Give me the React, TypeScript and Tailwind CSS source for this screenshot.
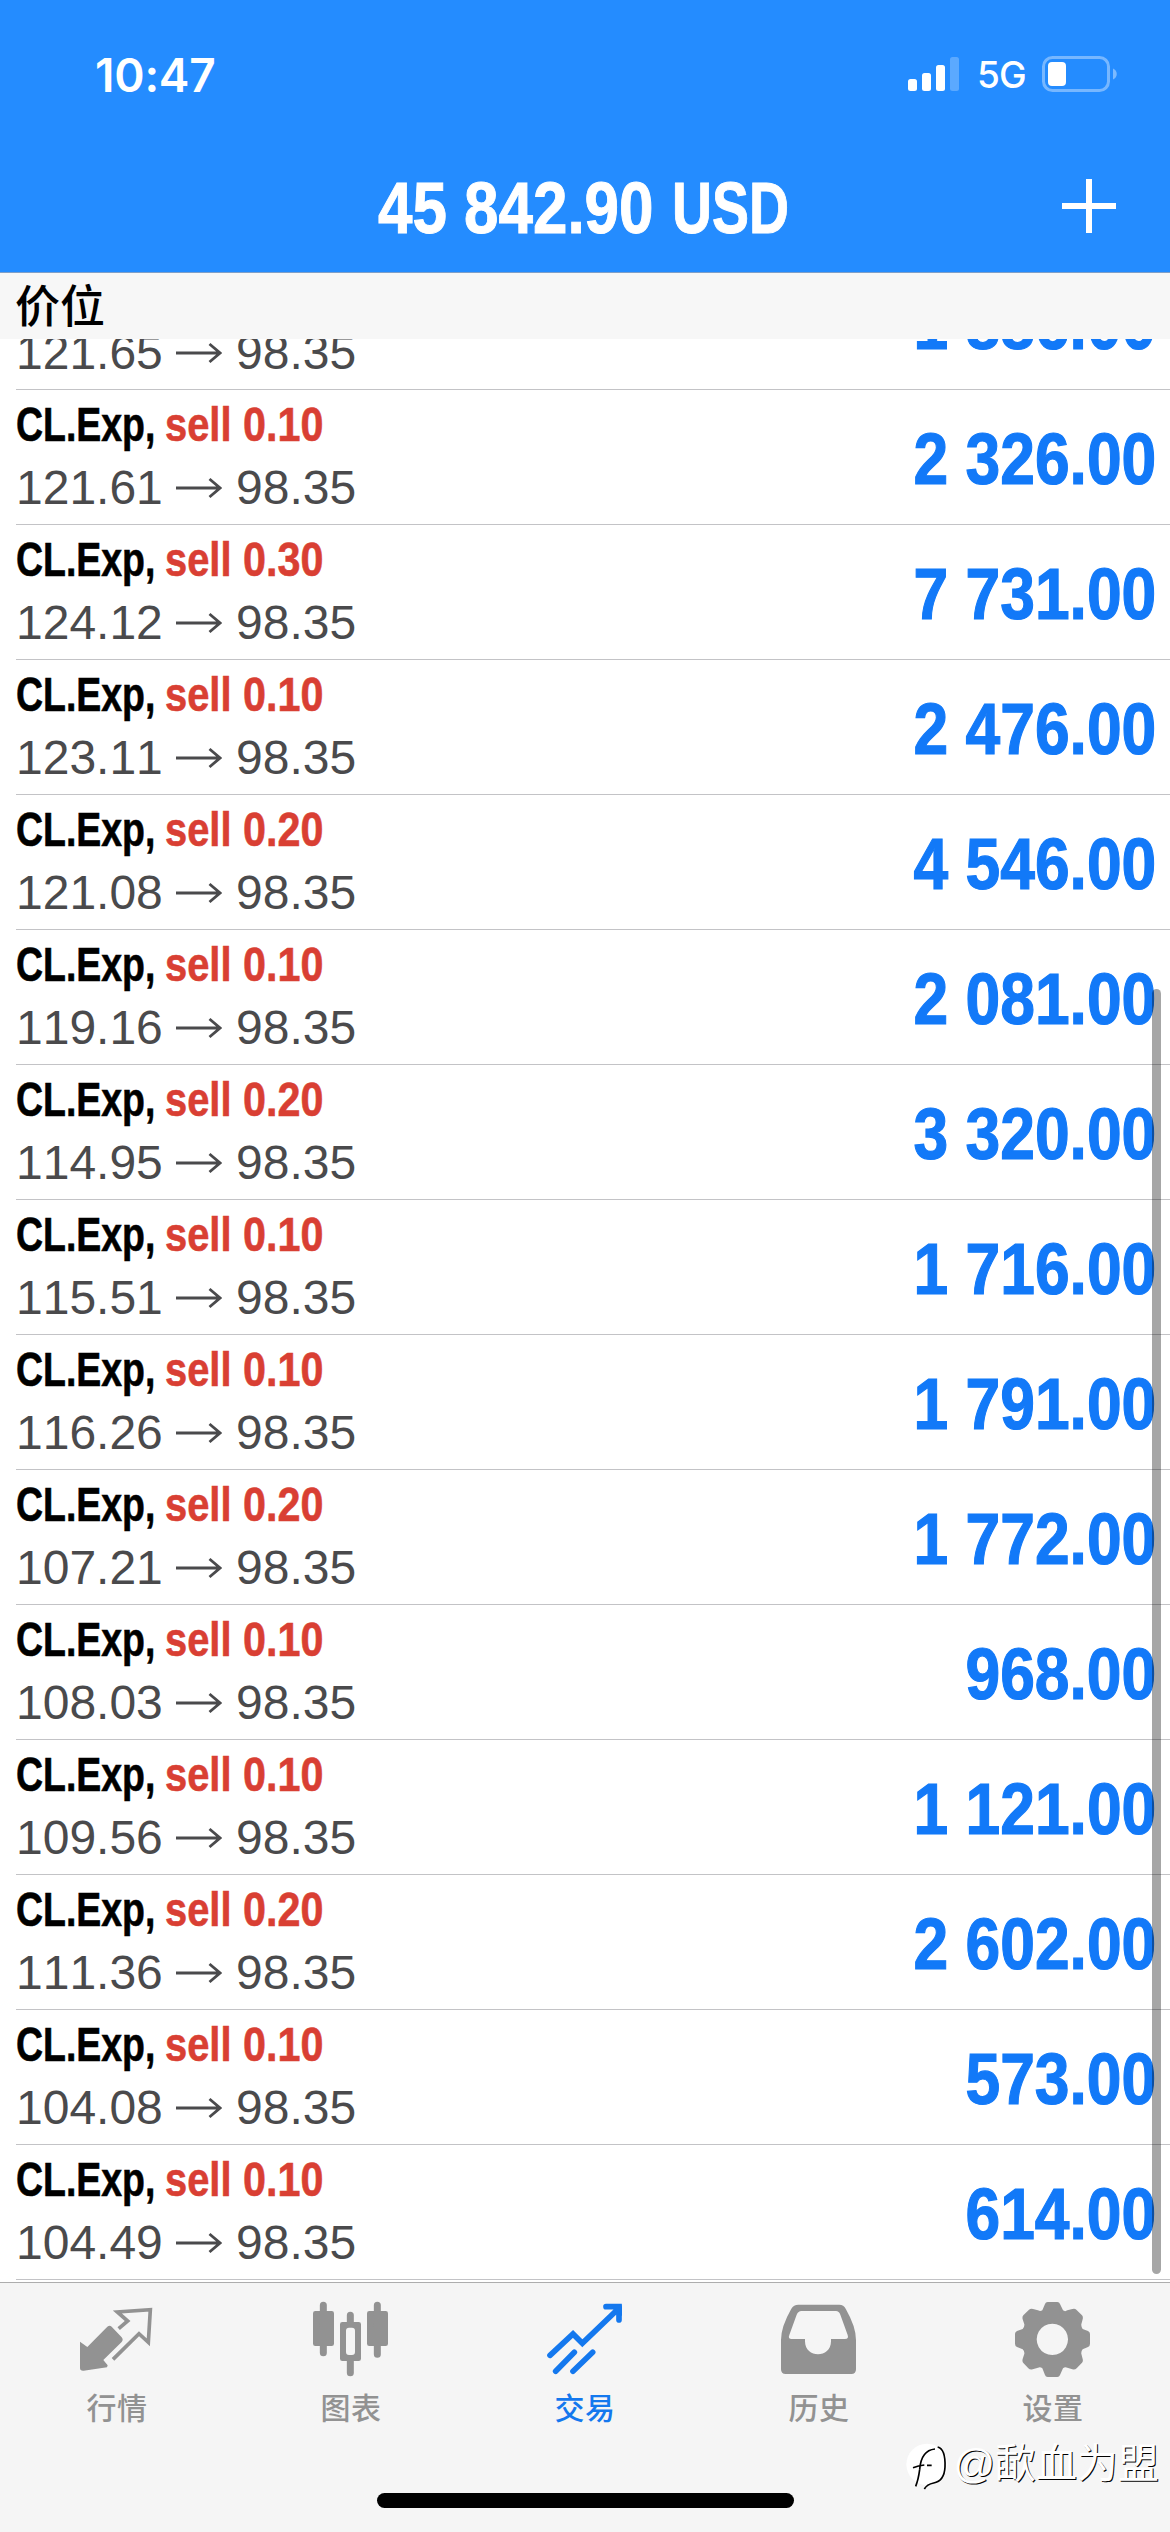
import React from "react";

const positions = [
  { volume: "0.10", open: "121.61", profit: "2 326.00" },
  { volume: "0.30", open: "124.12", profit: "7 731.00" },
  { volume: "0.10", open: "123.11", profit: "2 476.00" },
  { volume: "0.20", open: "121.08", profit: "4 546.00" },
  { volume: "0.10", open: "119.16", profit: "2 081.00" },
  { volume: "0.20", open: "114.95", profit: "3 320.00" },
  { volume: "0.10", open: "115.51", profit: "1 716.00" },
  { volume: "0.10", open: "116.26", profit: "1 791.00" },
  { volume: "0.20", open: "107.21", profit: "1 772.00" },
  { volume: "0.10", open: "108.03", profit: "968.00" },
  { volume: "0.10", open: "109.56", profit: "1 121.00" },
  { volume: "0.20", open: "111.36", profit: "2 602.00" },
  { volume: "0.10", open: "104.08", profit: "573.00" },
  { volume: "0.10", open: "104.49", profit: "614.00" },
];

function StatusBar() {
  return (
    <div className="flex h-[148px] items-start justify-between pr-[52px] pl-[95px] text-white">
      <span className="mt-[47px] font-['Inter'] text-[46px] leading-[56px] font-semibold tracking-[-0.2px]">
        10:47
      </span>
      <div className="mt-[56px] flex h-[36px] items-center">
        <svg className="mr-[17px] h-[36px] w-[52px]" viewBox="0 0 52 36" fill="currentColor">
          <rect x="0" y="23" width="9" height="12" rx="2.5" />
          <rect x="14" y="17" width="9" height="18" rx="2.5" />
          <rect x="28" y="9" width="9" height="26" rx="2.5" />
          <rect x="42" y="1" width="9" height="34" rx="2.5" opacity="0.25" />
        </svg>
        <span className="w-[65px] pt-[2px] font-['Inter'] text-[37px] leading-[36px] font-medium tracking-[-0.8px]">
          5G
        </span>
        <svg className="h-[36px] w-[76px]" viewBox="0 0 76 36">
          <rect x="1.5" y="1.5" width="65" height="33" rx="9" fill="none" stroke="#fff" strokeWidth="3" opacity="0.38" />
          <rect x="6" y="6" width="18" height="24" rx="4" fill="#fff" />
          <path d="M71 12.5c5 2 5 9 0 11z" fill="#fff" opacity="0.4" />
        </svg>
      </div>
    </div>
  );
}

function Header() {
  return (
    <header className="h-[273px] border-b border-[#7f9fc8] bg-[#248cff]">
      <StatusBar />
      <div className="relative">
        <h1 className="flex pt-[18px] pl-[378px] text-[72px] leading-[84px] font-bold whitespace-nowrap text-white [-webkit-text-stroke:1px_#fff]">
          <span className="w-[294px] origin-left scale-x-[0.86]">45 842.90</span>
          <span className="origin-left scale-x-[0.77]">USD</span>
        </h1>
        <svg className="absolute top-[31px] right-[54px] size-[54px]" viewBox="0 0 54 54" stroke="#fff" strokeWidth="6">
          <path d="M27 0v54M0 27h54" />
        </svg>
      </div>
    </header>
  );
}

function PriceLine({ open }: { open: string }) {
  return (
    <div className="flex items-center text-[48px] leading-[56px] text-[#4a4a4c] [font-kerning:none]">
      <span className="w-[160px]">{open}</span>
      <svg className="h-[22px] w-[46px]" viewBox="0 0 46 22" fill="none" stroke="currentColor" strokeWidth="2.8">
        <path d="M0 11h44M33.500 2l10.500 9-10.500 9" />
      </svg>
      <span className="ml-[14px]">98.35</span>
    </div>
  );
}

function PositionRow({ volume, open, profit }: { volume?: string; open: string; profit: string }) {
  return (
    <li className="flex h-[135px] justify-between">
      <div className="ml-[16px] flex-1 border-b border-[#c3c3c6]">
        <div className="mt-[7px] flex h-[56px] text-[48px] leading-[56px] font-bold [-webkit-text-stroke:0.6px_currentColor]">
          {volume && (
            <>
              <span className="w-[149px] origin-left scale-x-[0.78] whitespace-nowrap">CL.Exp,</span>
              <span className="w-[78px] origin-left scale-x-[0.83] text-[#d93f33]">sell</span>
              <span className="origin-left scale-x-[0.86] text-[#d93f33]">{volume}</span>
            </>
          )}
        </div>
        <div className="mt-[7px]">
          <PriceLine open={open} />
        </div>
      </div>
      <div className="border-b border-[#c3c3c6] pt-[27px] pr-[14px]">
        <span className="block origin-right scale-x-[0.866] text-[72px] leading-[84px] font-bold whitespace-nowrap text-[#1279f8] [-webkit-text-stroke:1.2px_currentColor] [font-kerning:none]">
          {profit}
        </span>
      </div>
    </li>
  );
}

const tabs = [
  {
    label: "行情",
    viewBox: "231 120 240 240",
    icon: (
      <>
        <path d="M240 245l22 16 60-61q7-5 13 0l30 32q6 7 0 14l-55 54 13 16-2 6-70 10q-11 1-11-8z" fill="currentColor" />
        <path d="M356 206l27-23-31-27 99-7-6 98-28-26-78 77" fill="none" stroke="currentColor" strokeWidth="11" />
      </>
    ),
  },
  {
    label: "图表",
    viewBox: "933 120 240 240",
    icon: (
      <>
        <rect x="939" y="153" width="63" height="105" rx="7" fill="currentColor" />
        <rect x="1101" y="153" width="63" height="105" rx="7" fill="currentColor" />
        <path d="M970 136v142M1132 136v147M1051 166v24M1051 300v38" stroke="currentColor" strokeWidth="21" strokeLinecap="round" />
        <path
          fillRule="evenodd"
          fill="currentColor"
          d="M1027 186h49q7 0 7 7v103q0 7-7 7h-49q-7 0-7-7V193q0-7 7-7zM1047 203q-9 0-9 9v64q0 9 9 9h9q9 0 9-9v-64q0-9-9-9z"
        />
      </>
    ),
  },
  {
    label: "交易",
    viewBox: "435 120 240 240",
    active: true,
    icon: (
      <>
        <path
          d="M450 286l69-64 28 28 101-97M618 140h39v40M467 334l56-57M519 334l59-57"
          fill="none"
          stroke="currentColor"
          strokeWidth="17"
          strokeLinecap="round"
          strokeLinejoin="miter"
        />
        <path d="M632 133h27q7 0 7 7v29z" fill="currentColor" />
      </>
    ),
  },
  {
    label: "历史",
    viewBox: "27 120 240 240",
    icon: (
      <path
        fillRule="evenodd"
        fill="currentColor"
        d="M85 134h123q13 0 19 12 31 54 31 94v88q0 14-14 14H47q-14 0-14-14v-88q0-40 31-94 7-12 21-12zM94 153q-9 0-14 11l-22 61q-5 12 7 12h40v7c0 52 78 52 78 0v-7h42q12 0 8-12l-22-61q-4-11-13-11z"
      />
    ),
  },
  {
    label: "设置",
    viewBox: "729 120 240 240",
    icon: (
      <path
        fillRule="evenodd"
        fill="currentColor"
        d="M833 126h29q6 0 8 6l9 19q6 5 13 0l15-4q8-2 12 2l17 17q4 4 2 12l-4 15q-1 7 4 14l16 6q6 3 6 9v29q0 7-6 10l-16 7q-5 6-4 13l4 16q2 7-2 11l-16 17q-5 5-13 3l-15-5q-7-4-13 2l-9 20q-2 6-8 6h-29q-6 0-8-6l-8-20q-6-5-13-2l-16 5q-8 2-13-3l-15-16q-4-4-2-12l5-16q1-7-5-13l-17-7q-6-3-6-10v-29q0-6 6-9l17-6q6-7 5-14l-5-15q-2-8 2-12l17-17q5-4 12-2l15 4q7 4 13 0l8-19q2-6 8-6zM847 191a47 47 0 1 0 .1 0z"
      />
    ),
  },
];

function TabBar() {
  return (
    <nav className="relative h-[250px] border-t border-[#adadad] bg-[#f5f5f5]">
      <div className="grid grid-cols-5">
        {tabs.map((tab) => (
          <div
            key={tab.label}
            className={`flex flex-col items-center pt-[17px] ${tab.active ? "text-[#1478ee]" : "text-[#929292]"}`}
          >
            <svg className="size-[80px]" viewBox={tab.viewBox}>
              {tab.icon}
            </svg>
            <span className="mt-[7px] text-[30px] leading-[44px] font-medium tracking-[0.5px]">{tab.label}</span>
          </div>
        ))}
      </div>
      <div className="absolute bottom-[24px] left-[377px] h-[15px] w-[417px] rounded-full bg-black" />
      <div className="absolute right-[11px] bottom-[41px] flex items-center">
        <svg className="h-[50px] w-[50px]" viewBox="0 0 150 150">
          <circle cx="72" cy="70" r="62" fill="#fff" />
          <path
            d="M38 136q8-20 12-50M30 80q16-6 34-8M50 86q4-58 46-62M72 73h14M104 18q24 6 22 60-2 42-34 48-20 4-28 18"
            fill="none"
            stroke="#000"
            strokeWidth="5"
          />
        </svg>
        <span className="-mt-[4px] text-[41px] leading-[50px] whitespace-nowrap text-white [text-shadow:1px_1px_0_#000]">
          @歃血为盟
        </span>
      </div>
    </nav>
  );
}

export default function App() {
  return (
    <div className="relative flex h-[2532px] w-[1170px] flex-col overflow-hidden bg-white font-['Liberation_Sans','Noto_Sans_CJK_SC',sans-serif]">
      <Header />
      <div className="h-[66px] bg-[#f7f7f7] pt-[2px] pl-[15px] text-[45px] leading-[66px] font-medium text-black">
        价位
      </div>
      {/* row scrolled halfway under the section header */}
      <ul className="h-[51px] overflow-hidden">
        <div className="-mt-[84px]">
          <PositionRow open="121.65" profit="1 886.00" />
        </div>
      </ul>
      <ul className="h-[1892px]">
        {positions.map((p) => (
          <PositionRow key={p.open} {...p} />
        ))}
      </ul>
      <TabBar />
      <div className="absolute top-[989px] right-[9px] h-[1285px] w-[9px] rounded-full bg-black/35" />
    </div>
  );
}
